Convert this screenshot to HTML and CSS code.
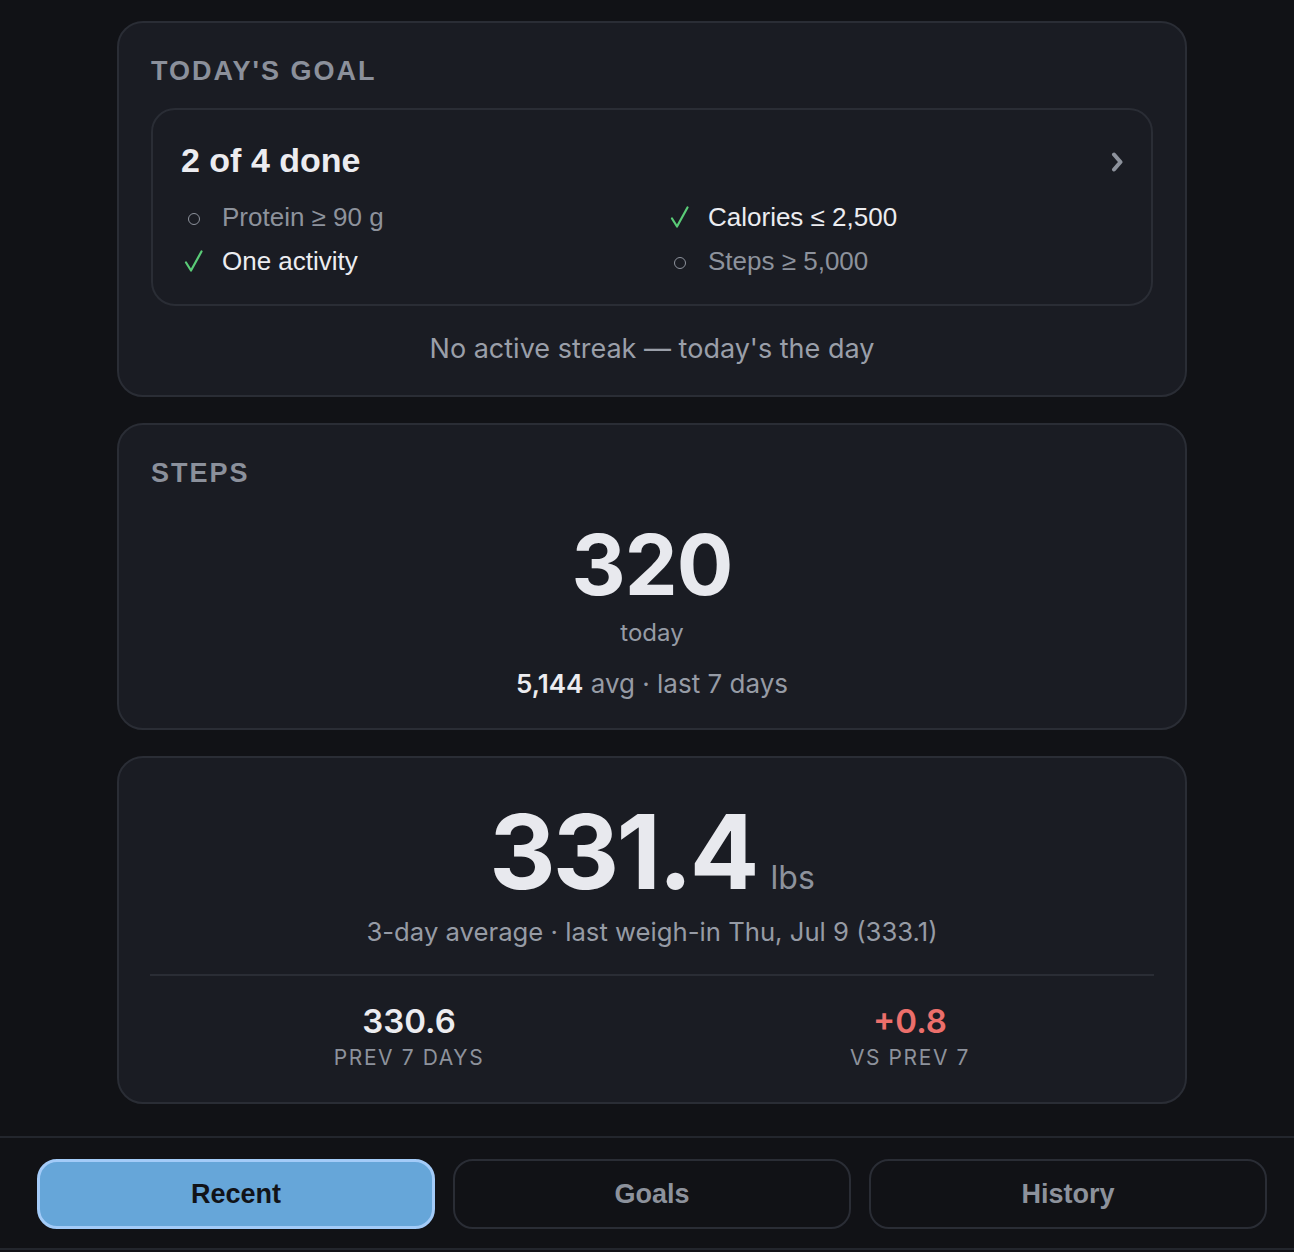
FILE: index.html
```html
<!DOCTYPE html>
<html lang="en">
<head>
<meta charset="utf-8">
<title>Today</title>
<link rel="stylesheet" href="styles.css">
</head>
<body>
<div class="page">
  <main class="cards">
    <section class="card goal-card">
      <h2 class="card-label">TODAY'S GOAL</h2>
      <div class="goal-box">
        <div class="goal-head">
          <span class="goal-count">2 of 4 done</span>
          <svg class="chev" width="13" height="20" viewBox="0 0 13 20"><path d="M3 2.5 L9.5 10 L3 17.5" fill="none" stroke="#8d929c" stroke-width="4" stroke-linecap="round" stroke-linejoin="round"/></svg>
        </div>
        <ul class="goal-list">
          <li class="goal pending"><span class="mark"><span class="ring"></span></span><span>Protein ≥ 90 g</span></li>
          <li class="goal done"><span class="mark"><svg width="20" height="22" viewBox="0 0 20 22"><path d="M2 12.5 L7 20.5 L17.5 1.5" fill="none" stroke="#5acb77" stroke-width="2.2" stroke-linecap="round" stroke-linejoin="round"/></svg></span><span>Calories ≤ 2,500</span></li>
          <li class="goal done"><span class="mark"><svg width="20" height="22" viewBox="0 0 20 22"><path d="M2 12.5 L7 20.5 L17.5 1.5" fill="none" stroke="#5acb77" stroke-width="2.2" stroke-linecap="round" stroke-linejoin="round"/></svg></span><span>One activity</span></li>
          <li class="goal pending"><span class="mark"><span class="ring"></span></span><span>Steps ≥ 5,000</span></li>
        </ul>
      </div>
      <p class="streak">No active streak — today's the day</p>
    </section>

    <section class="card steps-card">
      <h2 class="card-label">STEPS</h2>
      <div class="big-num">320</div>
      <div class="sub-today">today</div>
      <div class="avg-line"><strong>5,144</strong> avg · last 7 days</div>
    </section>

    <section class="card weight-card">
      <div class="weight-main"><span class="weight-num">331.4</span><span class="weight-unit">lbs</span></div>
      <div class="weight-sub">3-day average · last weigh-in Thu, Jul 9 (333.1)</div>
      <div class="stats">
        <div class="stat">
          <div class="stat-val">330.6</div>
          <div class="stat-label">PREV 7 DAYS</div>
        </div>
        <div class="stat">
          <div class="stat-val up">+0.8</div>
          <div class="stat-label">VS PREV 7</div>
        </div>
      </div>
    </section>
  </main>

  <nav class="tabs">
    <button class="tab active">Recent</button>
    <button class="tab">Goals</button>
    <button class="tab">History</button>
  </nav>
</div>
</body>
</html>
```
FILE: styles.css
```css
* { box-sizing: border-box; }

html, body {
  margin: 0;
  padding: 0;
  background: #111216;
  height: 1252px;
  overflow: hidden;
}

body {
  font-family: "Inter", "Liberation Sans", sans-serif;
  color: #e8e9ee;
}

.page {
  display: flex;
  flex-direction: column;
}

.cards {
  display: flex;
  flex-direction: column;
  gap: 26px;
  padding: 21px 0 0 117px;
  width: 1187px;
  height: 1136px;
}

.card {
  background: #1a1c23;
  border: 2px solid #2a2d35;
  border-radius: 26px;
  padding: 31px 32px 31px 32px;
}

.card-label {
  margin: 0;
  font-family: "Liberation Sans", Arial, sans-serif;
  font-weight: 700;
  font-size: 27px;
  line-height: 34px;
  letter-spacing: 2px;
  color: #8b909b;
}

/* Goal card */
.goal-card { padding-bottom: 31px; }

.goal-box {
  margin-top: 20px;
  border: 2px solid #2a2d35;
  border-radius: 24px;
  padding: 30px 28px 21px 28px;
}

.goal-head {
  display: flex;
  justify-content: space-between;
  align-items: center;
  height: 40px;
  margin-bottom: 15px;
}

.goal-count {
  font-family: "Liberation Sans", Arial, sans-serif;
  font-weight: 700;
  font-size: 34px;
  line-height: 40px;
  color: #ececf0;
}

.chev { margin-top: 4px; margin-right: -1px; }

.goal-list {
  list-style: none;
  margin: 0;
  padding: 0;
  display: grid;
  grid-template-columns: 1fr 1fr;
  column-gap: 30px;
}

.goal {
  display: flex;
  align-items: center;
  gap: 15px;
  font-family: "Liberation Sans", Arial, sans-serif;
  font-size: 26px;
  line-height: 44px;
  height: 44px;
}

.goal.pending { color: #8d929c; }
.goal.done { color: #ececf0; }

.mark {
  width: 26px;
  height: 44px;
  display: flex;
  align-items: center;
  justify-content: center;
}

.ring {
  width: 12px;
  height: 12px;
  border: 1.6px solid #8d929c;
  border-radius: 50%;
  margin-top: 3px;
}

.streak {
  margin: 27px 0 0;
  text-align: center;
  font-size: 27px;
  line-height: 31px;
  color: #9a9fa9;
}

/* Steps card */
.steps-card {
  display: flex;
  flex-direction: column;
  align-items: center;
  padding-bottom: 29px;
}

.steps-card .card-label { align-self: flex-start; }

.big-num {
  margin-top: 33px;
  font-size: 84px;
  line-height: 84px;
  font-weight: 700;
  letter-spacing: -1px;
  color: #e8e9ee;
}

.sub-today {
  margin-top: 11px;
  font-size: 24px;
  line-height: 29px;
  color: #969ba5;
}

.avg-line {
  margin-top: 21px;
  font-size: 26px;
  line-height: 31px;
  color: #969ba5;
}

.avg-line strong {
  font-weight: 600;
  color: #ececf0;
}

/* Weight card */
.weight-card {
  display: flex;
  flex-direction: column;
  align-items: stretch;
  padding: 42px 31px 32px 31px;
}

.weight-main {
  display: flex;
  justify-content: center;
  align-items: baseline;
  gap: 14px;
  line-height: 103px;
  height: 103px;
}

.weight-num {
  font-size: 103px;
  font-weight: 700;
  letter-spacing: -2.8px;
  color: #e8e9ee;
}

.weight-unit {
  font-size: 32px;
  color: #8d929c;
}

.weight-sub {
  margin-top: 13px;
  text-align: center;
  font-size: 25.7px;
  line-height: 31px;
  color: #969ba5;
}

.stats {
  margin-top: 27px;
  border-top: 2px solid #2a2d35;
  padding: 26px 0 0 15px;
  display: grid;
  grid-template-columns: 1fr 1fr;
  column-gap: 13px;
}

.stat {
  display: flex;
  flex-direction: column;
  align-items: center;
}

.stat-val {
  font-size: 33px;
  line-height: 39px;
  font-weight: 600;
  color: #ececf0;
}

.stat-val.up { color: #ec6f6b; }

.stat-label {
  margin-top: 4px;
  font-size: 21px;
  line-height: 25px;
  letter-spacing: 1.6px;
  color: #8d929c;
}

/* Bottom tabs */
.tabs {
  border-top: 2px solid #23262d;
  border-bottom: 2px solid #23262d;
  background: #111216;
  display: flex;
  gap: 18px;
  padding: 21px 0 19px 37px;
  height: 114px;
}

.tab {
  width: 398px;
  height: 70px;
  border-radius: 20px;
  border: 2px solid #2a2d35;
  background: transparent;
  font-family: "Liberation Sans", Arial, sans-serif;
  font-weight: 700;
  font-size: 27px;
  color: #8d929c;
  padding: 0;
}

.tab.active {
  background: #66a6d9;
  border: 3px solid #a3cbf8;
  color: #111318;
}
```
